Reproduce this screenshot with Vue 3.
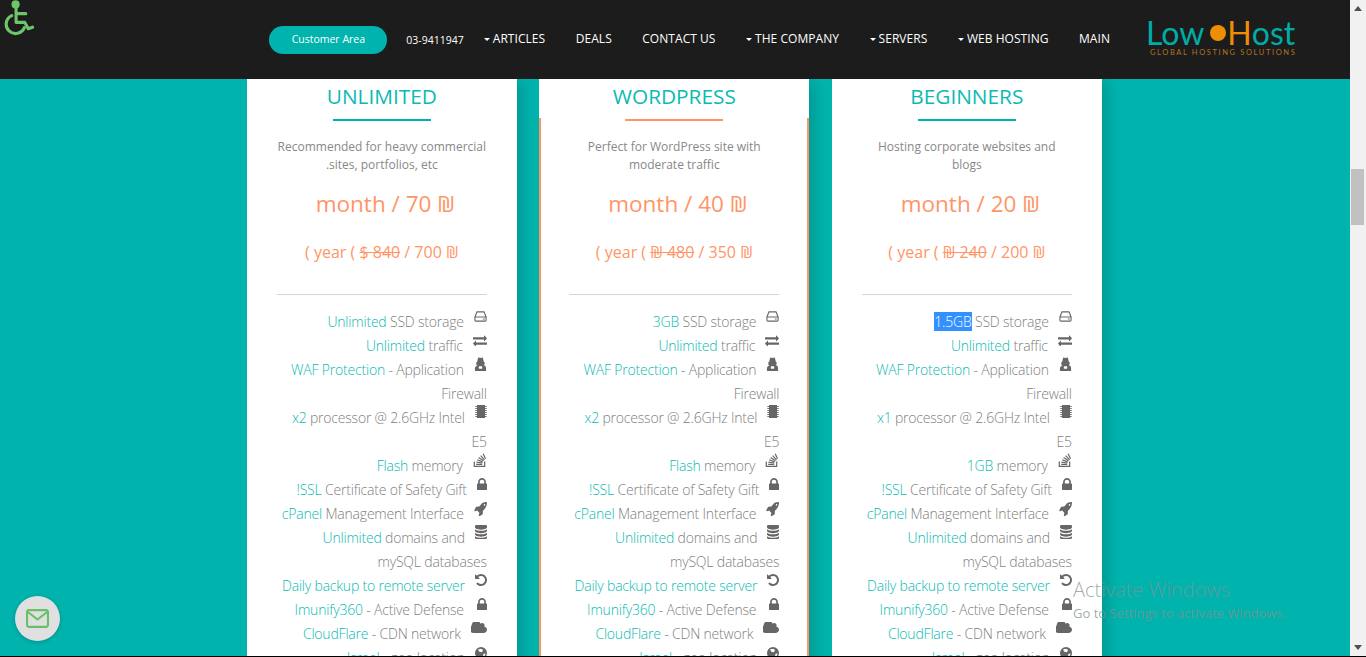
<script setup>
const lockPath = 'M640 768h512v-192q0-106-75-181t-181-75-181 75-75 181v192zm832 96v576q0 40-28 68t-68 28h-960q-40 0-68-28t-28-68v-576q0-40 28-68t68-28h32v-192q0-184 132-316t316-132 316 132 132 316v192h32q40 0 68 28t28 68z'

const icons = {
  hdd: { w: 13, h: 11, top: 1, vb: '0 0 14 12', s: 'M3.2 1h7.6L13 6.5V10a1 1 0 0 1-1 1H2a1 1 0 0 1-1-1V6.5zM1 6.5h12M9.5 8.8h2' },
  exchange: { w: 14, h: 11, top: 1, vb: '0 224 1792 1344', d: 'M1792 1184v192q0 13-9.5 22.5t-22.5 9.5h-1376v192q0 13-9.5 22.5t-22.5 9.5q-12 0-24-10l-319-320q-9-9-9-22 0-14 9-23l320-320q9-9 23-9 13 0 22.5 9.5t9.5 22.5v192h1376q13 0 22.5 9.5t9.5 22.5zm0-544q0 14-9 23l-320 320q-9 9-23 9-13 0-22.5-9.5t-9.5-22.5v-192h-1376q-13 0-22.5-9.5t-9.5-22.5v-192q0-13 9.5-22.5t22.5-9.5h1376v-192q0-14 9-23t23-9q12 0 24 10l319 319q9 9 9 23z' },
  secret: { w: 13, h: 14, top: -1, vb: '0 0 14 14', evenodd: true, d: 'M4.500 .5 7 1 9.500 .5l1 4 1 1v1.500l-1 1c1.500 .5 2.500 1.500 2.500 3V14H1v-2.500c0-1.500 1-2.500 2.500-3l-1-1V5.500l1-1zM5.200 9.200v2.600h3.600V9.200z' },
  chip: { w: 12, h: 13, top: -1, vb: '0 0 12 13', d: 'M2 0h8v13H2z', s: 'M.3 1.500h11.400M.3 3.500h11.400M.3 5.500h11.400M.3 7.500h11.400M.3 9.500h11.400M.3 11.500h11.400', thin: true },
  stack: { w: 14, h: 14, top: -1, vb: '0 0 14 14', s: 'M1.300 8.500v4.800h10.400V8.500M3.200 11.300h6M3.400 9.100l5.900.9M4.200 6.800l5.500 2.100M5.600 4.600l4.900 3.200M7.700 2.600l3.800 4.300M10.200 .8l2.300 5' },
  lock: { w: 10, h: 12, top: 0, vb: '320 128 1152 1408', d: lockPath },
  lockwide: { w: 10, h: 12, top: 0, pad: 3, vb: '320 128 1152 1408', d: lockPath },
  rocket: { w: 13, h: 14, top: 0, vb: '64 128 1664 1600', d: 'M1504 448q0-40-28-68t-68-28-68 28-28 68 28 68 68 28 68-28 28-68zm224-288q0 249-75.5 430.5t-253.5 360.5q-81 80-195 176l-20 379q-2 16-16 26l-384 224q-7 4-16 4-12 0-23-9l-64-64q-13-14-8-32l85-276-281-281-276 85q-3 1-9 1-14 0-23-9l-64-64q-17-19-5-39l224-384q10-14 26-16l379-20q96-114 176-195 188-187 358-258t431-71q14 0 24 9.5t10 22.5z' },
  db: { w: 12, h: 14, top: -1, vb: '128 128 1536 1536', d: 'M896 768q237 0 443-43t325-127v170q0 69-103 128t-280 93.5-385 34.5-385-34.5-280-93.5-103-128v-170q119 84 325 127t443 43zm0 768q237 0 443-43t325-127v170q0 69-103 128t-280 93.5-385 34.5-385-34.5-280-93.5-103-128v-170q119 84 325 127t443 43zm0-384q237 0 443-43t325-127v170q0 69-103 128t-280 93.5-385 34.5-385-34.5-280-93.5-103-128v-170q119 84 325 127t443 43zm0-1152q208 0 385 34.5t280 93.5 103 128v128q0 69-103 128t-280 93.5-385 34.5-385-34.5-280-93.5-103-128v-128q0-69 103-128t280-93.5 385-34.5z' },
  undo: { w: 12, h: 12, top: 0, vb: '128 128 1536 1536', d: 'M1664 896q0 156-61 298t-164 245-245 164-298 61q-172 0-327-72.5t-264-204.5q-7-10-6.5-22.5t8.5-20.5l137-138q10-9 25-9 16 2 23 12 73 95 179 147t225 52q104 0 198.5-40.5t163.5-109.5 109.5-163.5 40.5-198.5-40.5-198.5-109.5-163.5-163.5-109.5-198.5-40.5q-98 0-188 35.5t-160 101.5l137 138q31 30 14 69-17 40-59 40h-448q-26 0-45-19t-19-45v-448q0-42 40-59 39-17 69 14l130 129q107-101 244.5-156.5t284.5-55.5q156 0 298 61t245 164 164 245 61 298z' },
  cloud: { w: 16, h: 11, top: 0, vb: '0 256 1728 1280', d: 'M1728 1152q0 159-112.5 271.5t-271.5 112.5h-1088q-185 0-316.5-131.5t-131.5-316.5q0-132 71-241.5t187-163.5q-2-28-2-43 0-212 150-362t362-150q158 0 286.5 88t187.5 230q70-62 166-62 106 0 181 75t75 181q0 75-41 138 129 30 213 134.5t84 239.5z' },
  globe: { w: 12, h: 12, top: 1, vb: '0 0 14 14', evenodd: true, d: 'M7 0a7 7 0 1 0 0 14A7 7 0 0 0 7 0zM3.500 3 7 2l2.500 1.500L8 6 5 5.500zM10 8l2.500-.5L11 11l-2 1.500z' }
}

const rows = (storage, cores, memory) => [
  { icon: 'hdd', hl: storage, rest: ' SSD storage', sel: storage === '1.5GB' },
  { icon: 'exchange', hl: 'Unlimited', rest: ' traffic' },
  { icon: 'secret', hl: 'WAF Protection', rest: ' - Application Firewall' },
  { icon: 'chip', hl: cores, rest: ' processor @ 2.6GHz Intel E5' },
  { icon: 'stack', hl: memory, rest: ' memory' },
  { icon: 'lock', hl: '!SSL', rest: ' Certificate of Safety Gift' },
  { icon: 'rocket', hl: 'cPanel', rest: ' Management Interface' },
  { icon: 'db', hl: 'Unlimited', rest: ' domains and mySQL databases' },
  { icon: 'undo', hl: 'Daily backup to remote server', rest: '' },
  { icon: 'lockwide', hl: 'Imunify360', rest: ' - Active Defense' },
  { icon: 'cloud', hl: 'CloudFlare', rest: ' - CDN network' },
  { icon: 'globe', hl: 'Israel', rest: ' - geo location' }
]

const plans = [
  { name: 'UNLIMITED', desc: 'Recommended for heavy commercial .sites, portfolios, etc', month: 70, old: '$ 840', year: 700, rows: rows('Unlimited', 'x2', 'Flash') },
  { name: 'WORDPRESS', featured: true, desc: 'Perfect for WordPress site with moderate traffic', month: 40, old: '₪ 480', year: 350, rows: rows('3GB', 'x2', 'Flash') },
  { name: 'BEGINNERS', desc: 'Hosting corporate websites and blogs', month: 20, old: '₪ 240', year: 200, rows: rows('1.5GB', 'x1', '1GB') }
]

const nav = [
  { label: 'ARTICLES', caret: true },
  { label: 'DEALS' },
  { label: 'CONTACT US' },
  { label: 'THE COMPANY', caret: true },
  { label: 'SERVERS', caret: true },
  { label: 'WEB HOSTING', caret: true },
  { label: 'MAIN' }
]
</script>

<template>
  <div class="app">
    <div class="window">
      <div class="page">
        <header class="topbar">
          <a class="cta">Customer Area</a>
          <span class="phone">03-9411947</span>
          <nav class="nav">
            <a v-for="item in nav" :key="item.label" class="nav-item">
              <i v-if="item.caret" class="caret"></i>{{ item.label }}
            </a>
          </nav>
          <div class="logo">
            <div class="logo-main">Low<span class="logo-dot"></span><span class="logo-h">H</span>ost</div>
            <div class="logo-sub">GLOBAL HOSTING SOLUTIONS</div>
          </div>
        </header>

        <main class="plans">
          <section v-for="plan in plans" :key="plan.name" class="card">
            <h2 class="title">{{ plan.name }}</h2>
            <div class="body" :class="{ featured: plan.featured }">
              <div class="rule"></div>
              <p class="desc">{{ plan.desc }}</p>
              <div class="price">month / {{ plan.month }} ₪</div>
              <div class="year">( year ( <s>{{ plan.old }}</s> / {{ plan.year }} ₪</div>
              <ul class="features">
                <li v-for="(row, i) in plan.rows" :key="i">
                  <svg
                    class="ficon"
                    :viewBox="icons[row.icon].vb"
                    preserveAspectRatio="none"
                    :style="{ width: icons[row.icon].w + 'px', height: icons[row.icon].h + 'px', marginTop: icons[row.icon].top + 'px', marginLeft: 10 + (icons[row.icon].pad || 0) + 'px' }"
                  >
                    <path v-if="icons[row.icon].d" :d="icons[row.icon].d" fill="#666" :fill-rule="icons[row.icon].evenodd ? 'evenodd' : 'nonzero'" />
                    <path v-if="icons[row.icon].s" :d="icons[row.icon].s" fill="none" stroke="#666" :stroke-width="icons[row.icon].thin ? 0.9 : 1.2" />
                  </svg>
                  <span class="hl" :class="{ selected: row.sel }">{{ row.hl }}</span>{{ row.rest }}
                </li>
              </ul>
            </div>
          </section>
        </main>
      </div>

      <div class="scrollbar">
        <span class="arrow up"></span>
        <span class="thumb"></span>
        <span class="arrow down"></span>
      </div>
    </div>

    <svg class="a11y" viewBox="0 0 34 36" fill="none" stroke="#6fc56c" stroke-width="3.2" stroke-linecap="round" stroke-linejoin="round">
      <circle cx="14" cy="4" r="4.2" fill="#6fc56c" stroke="none" />
      <path d="M14.500 8v14.500h9l3.500 6.500 4.500-1.500M14.500 13.500h10" />
      <path d="M10 15.500a9.700 9.700 0 1 0 13 12.500" />
    </svg>

    <div class="fab">
      <svg viewBox="0 0 22 18" fill="none" stroke="#6abf69" stroke-width="2" stroke-linejoin="round">
        <rect x="1" y="1" width="20" height="16" rx="2" />
        <path d="M1.500 2.500 11 10l9.500-7.500" />
      </svg>
    </div>

    <div class="watermark">
      <div class="wm-title">Activate Windows</div>
      <div class="wm-sub">Go to Settings to activate Windows.</div>
    </div>
  </div>
</template>

<style>
html, body { margin: 0; overflow: hidden; background: #000; }
</style>

<style scoped>
.app {
  position: relative;
  height: 657px;
  padding-bottom: 1px;
  box-sizing: border-box;
  background: #000;
  font-family: "Open Sans", "Noto Sans", sans-serif;
  overflow: hidden;
}
.window { display: flex; height: 656px; }
.page {
  flex: 1;
  min-width: 0;
  display: flex;
  flex-direction: column;
  background: #00b3ac;
  overflow: hidden;
}
.topbar {
  flex: 0 0 79px;
  display: flex;
  align-items: center;
  justify-content: flex-end;
  padding-right: 53px;
  background: #1c1c1c;
  color: #fff;
  position: relative;
  z-index: 2;
}
.cta {
  width: 118px;
  height: 28px;
  line-height: 27px;
  border-radius: 14px;
  background: #00b3ac;
  font-size: 10.500px;
  text-align: center;
  margin-right: 19px;
}
.phone { font-size: 10.500px; margin-right: 20px; }
.nav { display: flex; gap: 30.500px; margin-right: 38px; }
.nav-item { font-size: 12px; white-space: nowrap; letter-spacing: .05px; position: relative; top: -1px; }
.caret {
  display: inline-block;
  border: 3px solid transparent;
  border-top-color: #fff;
  border-bottom: 0;
  margin-right: 3px;
  vertical-align: 2px;
}
.logo { width: 149px; position: relative; top: -1px; }
.logo-main {
  font-family: Lato, sans-serif;
  font-size: 32px;
  line-height: 26px;
  color: #00aca6;
  white-space: nowrap;
  display: flex;
  align-items: center;
  margin-left: -2px;
}
.logo-dot {
  flex: none;
  width: 16px;
  height: 16px;
  border-radius: 50%;
  background: #ee8e05;
  margin: 0 1px 0 6px;
}
.logo-h { color: #ee8e05; }
.logo-sub {
  font-family: Lato, sans-serif;
  font-size: 7.500px;
  line-height: 9px;
  letter-spacing: 1.620px;
  color: #b5741f;
  white-space: nowrap;
  margin-top: 2px;
  padding-left: 2px;
}

.plans {
  flex: 1;
  display: flex;
  align-items: flex-start;
  gap: 22.500px;
  padding-left: 246.800px;
  min-height: 0;
}
.card {
  flex: 0 0 270px;
  background: #fff;
  box-shadow: 9px 0 12px -3px rgba(0, 0, 0, .14);
}
.title {
  margin: 0;
  height: 39px;
  line-height: 34px;
  font-size: 20.800px;
  font-weight: 400;
  text-align: center;
  color: #0bbab3;
}
.body {
  padding: 1px 28px 0;
  border: solid transparent;
  border-width: 0 2px;
}
.body.featured { border-color: #ff9566; }
.rule { width: 98px; height: 2px; margin: 0 auto 17px; background: #00b3ac; }
.featured .rule { background: #ff9566; }
.desc {
  margin: 0;
  font-size: 12px;
  line-height: 18px;
  color: #888;
  text-align: center;
}
.price {
  margin-top: 15px;
  padding-left: 7px;
  font-size: 22.500px;
  line-height: 30px;
  color: #ff9566;
  text-align: center;
}
.year {
  margin-top: 21px;
  font-size: 16px;
  line-height: 24px;
  color: #ff9566;
  text-align: center;
}
.features {
  list-style: none;
  margin: 30px 0 0;
  padding: 15px 0 0;
  border-top: 1px solid #d5d5d5;
}
.features li {
  display: flow-root;
  font-size: 14px;
  line-height: 24px;
  font-weight: 300;
  letter-spacing: -.2px;
  color: #808080;
  text-align: right;
}
.ficon { float: right; display: block; }
.hl { color: #0bbab3; }
.hl.selected { background: #3390ff; color: #fff; }

.scrollbar {
  flex: 0 0 16px;
  position: relative;
  background: #f1f1f1;
}
.arrow {
  position: absolute;
  left: 4px;
  border: 4px solid transparent;
}
.arrow.up { top: 6px; border-top: 0; border-bottom: 5px solid #505050; }
.arrow.down { bottom: 6px; border-bottom: 0; border-top: 5px solid #505050; }
.thumb {
  position: absolute;
  left: 1px;
  right: 2px;
  top: 169px;
  height: 56px;
  background: #c1c1c1;
}

.a11y { position: absolute; left: 2px; top: 0; width: 33px; height: 36px; z-index: 3; }
.fab {
  position: absolute;
  left: 15px;
  top: 596px;
  width: 45px;
  height: 45px;
  border-radius: 50%;
  background: #e0e0e0;
  box-shadow: 0 1px 4px rgba(0, 0, 0, .2);
  display: flex;
  align-items: center;
  justify-content: center;
  z-index: 3;
}
.fab svg { width: 23px; height: 19px; }
.watermark {
  position: absolute;
  left: 1073px;
  top: 577px;
  color: rgba(130, 145, 145, .75);
  pointer-events: none;
  z-index: 4;
  white-space: nowrap;
}
.wm-title { font-size: 20px; line-height: 26px; font-weight: 300; }
.wm-sub { font-size: 13px; line-height: 20px; font-weight: 400; }
</style>
